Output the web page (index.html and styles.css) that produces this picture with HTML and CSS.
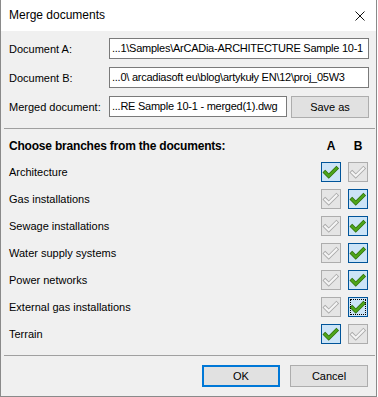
FILE: index.html
```html
<!DOCTYPE html>
<html lang="en">
<head>
    <meta charset="UTF-8">
    <title>Merge documents</title>
    <link rel="stylesheet" href="styles.css">
</head>
<body>
    <svg width="0" height="0" class="defs">
        <defs>
            <g id="tick-on">
                <path d="M3.5 10.5 L7.5 14.5 L16 6" fill="none" stroke="#2f6f0c" stroke-width="4.2" stroke-linecap="square"/>
                <path d="M3.5 10.5 L7.5 14.5 L16 6" fill="none" stroke="#4ea51a" stroke-width="2.6" stroke-linecap="square"/>
            </g>
            <g id="tick-off">
                <path d="M3.5 10.5 L7.5 14.5 L16 6" fill="none" stroke="#a8a8a8" stroke-width="4.2" stroke-linecap="square"/>
                <path d="M3.5 10.5 L7.5 14.5 L16 6" fill="none" stroke="#f4f4f4" stroke-width="2.4" stroke-linecap="square"/>
            </g>
        </defs>
    </svg>

    <div class="window">
        <div class="titlebar">
            <span class="title">Merge documents</span>
            <svg class="close" width="10" height="10" viewBox="0 0 10 10">
                <path d="M0.5 0.5 L9.5 9.5 M9.5 0.5 L0.5 9.5" stroke="#111" stroke-width="1"/>
            </svg>
        </div>

        <div class="content">
            <div class="files">
                <div class="file-row">
                    <label>Document A:</label>
                    <div class="textbox">...1\Samples\ArCADia-ARCHITECTURE Sample 10-1</div>
                </div>
                <div class="file-row">
                    <label>Document B:</label>
                    <div class="textbox">...0\ arcadiasoft eu\blog\artykuły EN\12\proj_05W3</div>
                </div>
                <div class="file-row">
                    <label>Merged document:</label>
                    <div class="textbox short">...RE Sample 10-1 - merged(1).dwg</div>
                    <button class="btn save">Save as</button>
                </div>
            </div>

            <div class="separator"></div>

            <div class="branches">
                <div class="branch-head">
                    <span class="head-text">Choose branches from the documents:</span>
                    <span class="col">A</span>
                    <span class="col">B</span>
                </div>
                <div class="branch">
                    <span class="name">Architecture</span>
                    <span class="check on"><svg viewBox="0 0 20 20"><use href="#tick-on"/></svg></span>
                    <span class="check off"><svg viewBox="0 0 20 20"><use href="#tick-off"/></svg></span>
                </div>
                <div class="branch">
                    <span class="name">Gas installations</span>
                    <span class="check off"><svg viewBox="0 0 20 20"><use href="#tick-off"/></svg></span>
                    <span class="check on"><svg viewBox="0 0 20 20"><use href="#tick-on"/></svg></span>
                </div>
                <div class="branch">
                    <span class="name">Sewage installations</span>
                    <span class="check off"><svg viewBox="0 0 20 20"><use href="#tick-off"/></svg></span>
                    <span class="check on"><svg viewBox="0 0 20 20"><use href="#tick-on"/></svg></span>
                </div>
                <div class="branch">
                    <span class="name">Water supply systems</span>
                    <span class="check off"><svg viewBox="0 0 20 20"><use href="#tick-off"/></svg></span>
                    <span class="check on"><svg viewBox="0 0 20 20"><use href="#tick-on"/></svg></span>
                </div>
                <div class="branch">
                    <span class="name">Power networks</span>
                    <span class="check off"><svg viewBox="0 0 20 20"><use href="#tick-off"/></svg></span>
                    <span class="check on"><svg viewBox="0 0 20 20"><use href="#tick-on"/></svg></span>
                </div>
                <div class="branch">
                    <span class="name">External gas installations</span>
                    <span class="check off"><svg viewBox="0 0 20 20"><use href="#tick-off"/></svg></span>
                    <span class="check on focus"><svg viewBox="0 0 20 20"><use href="#tick-on"/></svg></span>
                </div>
                <div class="branch">
                    <span class="name">Terrain</span>
                    <span class="check on"><svg viewBox="0 0 20 20"><use href="#tick-on"/></svg></span>
                    <span class="check off"><svg viewBox="0 0 20 20"><use href="#tick-off"/></svg></span>
                </div>
            </div>

            <div class="separator bottom"></div>

            <div class="actions">
                <button class="btn ok">OK</button>
                <button class="btn">Cancel</button>
            </div>
        </div>
    </div>
</body>
</html>
```

FILE: styles.css
```css
body {
    margin: 0;
    padding: 0;
    background-color: #ffffff;
    font-family: "Liberation Sans", Arial, sans-serif;
    font-size: 11px;
    color: #000;
}

.defs {
    position: absolute;
}

.window {
    width: 375px;
    height: 396px;
    border-left: 1px solid #8a8a8a;
    border-right: 1px solid #8a8a8a;
    border-bottom: 1px solid #8a8a8a;
    background-color: #f0f0f0;
    display: flex;
    flex-direction: column;
}

.titlebar {
    height: 31px;
    background-color: #ffffff;
    display: flex;
    align-items: center;
    justify-content: space-between;
    padding: 0 11px 0 8px;
    flex-shrink: 0;
}

.title {
    font-size: 12px;
    padding-bottom: 1px;
}

.close {
    display: block;
}

.content {
    display: flex;
    flex-direction: column;
    padding-top: 7px;
}

.files {
    display: flex;
    flex-direction: column;
    gap: 8px;
    padding: 0 7px 0 8px;
}

.file-row {
    display: flex;
    align-items: center;
    height: 21px;
}

.file-row label {
    width: 100px;
    flex-shrink: 0;
    white-space: nowrap;
}

.textbox {
    flex: 1;
    height: 19px;
    line-height: 19px;
    background-color: #fff;
    border: 1px solid #7a7a7a;
    padding: 0 2px;
    white-space: nowrap;
    overflow: hidden;
    letter-spacing: -0.25px;
}

.textbox.short {
    flex: 0 0 172px;
}

.btn {
    font-family: inherit;
    font-size: 11px;
    color: #000;
    background-color: #e1e1e1;
    border: 1px solid #adadad;
    height: 22px;
    width: 78px;
    padding: 0;
}

.save {
    margin-left: 4px;
}

.separator {
    height: 1px;
    background-color: #a0a0a0;
    margin: 11px 1px 0 3px;
}

.branches {
    display: flex;
    flex-direction: column;
    gap: 7px;
    padding: 8px 8px 0 8px;
}

.branch-head {
    display: flex;
    align-items: center;
    height: 18px;
    font-weight: bold;
    font-size: 12px;
}

.head-text {
    flex: 1;
    letter-spacing: -0.2px;
}

.col {
    width: 20px;
    text-align: center;
    margin-left: 7px;
}

.branch {
    display: flex;
    align-items: center;
    height: 20px;
}

.name {
    flex: 1;
}

.check {
    width: 18px;
    height: 18px;
    margin-left: 7px;
    border: 1px solid #adadad;
    background-color: #e5e5e5;
    position: relative;
}

.check svg {
    display: block;
    width: 18px;
    height: 18px;
}

.check.on {
    border-color: #005499;
    background-color: #cce4f7;
}

.check.focus::after {
    content: "";
    position: absolute;
    left: 1px;
    top: 1px;
    right: 1px;
    bottom: 1px;
    border: 1px dotted #000;
}

.separator.bottom {
    margin-top: 11px;
}

.actions {
    display: flex;
    justify-content: flex-end;
    gap: 10px;
    padding: 9px 8px 0 0;
}

.ok {
    border: 2px solid #0078d7;
}
```
